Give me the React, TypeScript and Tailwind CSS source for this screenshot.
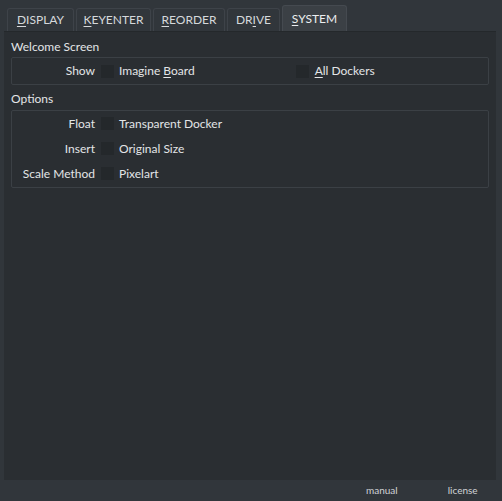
const tabs = [
  { pre: '', key: 'D', post: 'ISPLAY', w: 'w-[67px]' },
  { pre: '', key: 'K', post: 'EYENTER', w: 'w-[75px]' },
  { pre: '', key: 'R', post: 'EORDER', w: 'w-[72px]' },
  { pre: 'DR', key: 'I', post: 'VE', w: 'w-[53px]' },
]

function Check() {
  return <span className="w-[13px] h-[13px] bg-[#24282b] shrink-0" />
}

function Row({ label, text }: { label: string; text: React.ReactNode }) {
  return (
    <div className="flex items-center h-[25px]">
      <span className="w-[89px] text-right pr-[6px]">{label}</span>
      <Check />
      <span className="ml-[5px]">{text}</span>
    </div>
  )
}

export default function App() {
  return (
    <div
      className="w-[502px] h-[501px] bg-[#31363b] flex flex-col text-[12px] text-[#e3e5e7]"
      style={{ fontFamily: 'Lato, "Open Sans", sans-serif' }}
    >
      {/* tab bar */}
      <div className="h-[31px] flex items-end pl-[7px] gap-[2px] shrink-0 text-[12px]">
        {tabs.map((t) => (
          <div
            key={t.key}
            className={`${t.w} h-[23px] flex items-center justify-center bg-[#31363b] border border-b-0 border-[#3e4349] rounded-t-[3px] text-[#d6d9dc]`}
          >
            {t.pre}
            <span className="underline underline-offset-2">{t.key}</span>
            {t.post}
          </div>
        ))}
        <div className="w-[65px] h-[26px] flex items-center justify-center bg-[#3b4045] border border-b-0 border-[#454a50] rounded-t-[3px] text-[#eceef0]">
          <span className="underline underline-offset-2">S</span>YSTEM
        </div>
      </div>

      {/* panel */}
      <div className="ml-[4px] w-[492px] h-[449px] bg-[#2a2e32] border-t border-[#24282b] flex flex-col px-[7px] pt-[7px]">
        <div className="h-[16px] leading-[16px]">Welcome Screen</div>
        <div className="mt-[2px] h-[28px] border border-[#3b4045] rounded-[2px] flex items-center">
          <Row label="Show" text={<>Imagine <span className="underline underline-offset-2">B</span>oard</>} />
          <div className="ml-[101px] flex items-center">
            <Check />
            <span className="ml-[6px]">
              <span className="underline underline-offset-2">A</span>ll Dockers
            </span>
          </div>
        </div>
        <div className="mt-[6px] h-[16px] leading-[16px]">Options</div>
        <div className="mt-[3px] h-[78px] border border-[#3b4045] rounded-[2px] flex flex-col">
          <Row label="Float" text="Transparent Docker" />
          <Row label="Insert" text="Original Size" />
          <Row label="Scale Method" text="Pixelart" />
        </div>
      </div>

      {/* footer */}
      <div className="flex-1 flex items-center text-[10px] text-[#d0d3d6]">
        <span className="ml-[366px]">manual</span>
        <span className="ml-[50px]">license</span>
      </div>
    </div>
  )
}
